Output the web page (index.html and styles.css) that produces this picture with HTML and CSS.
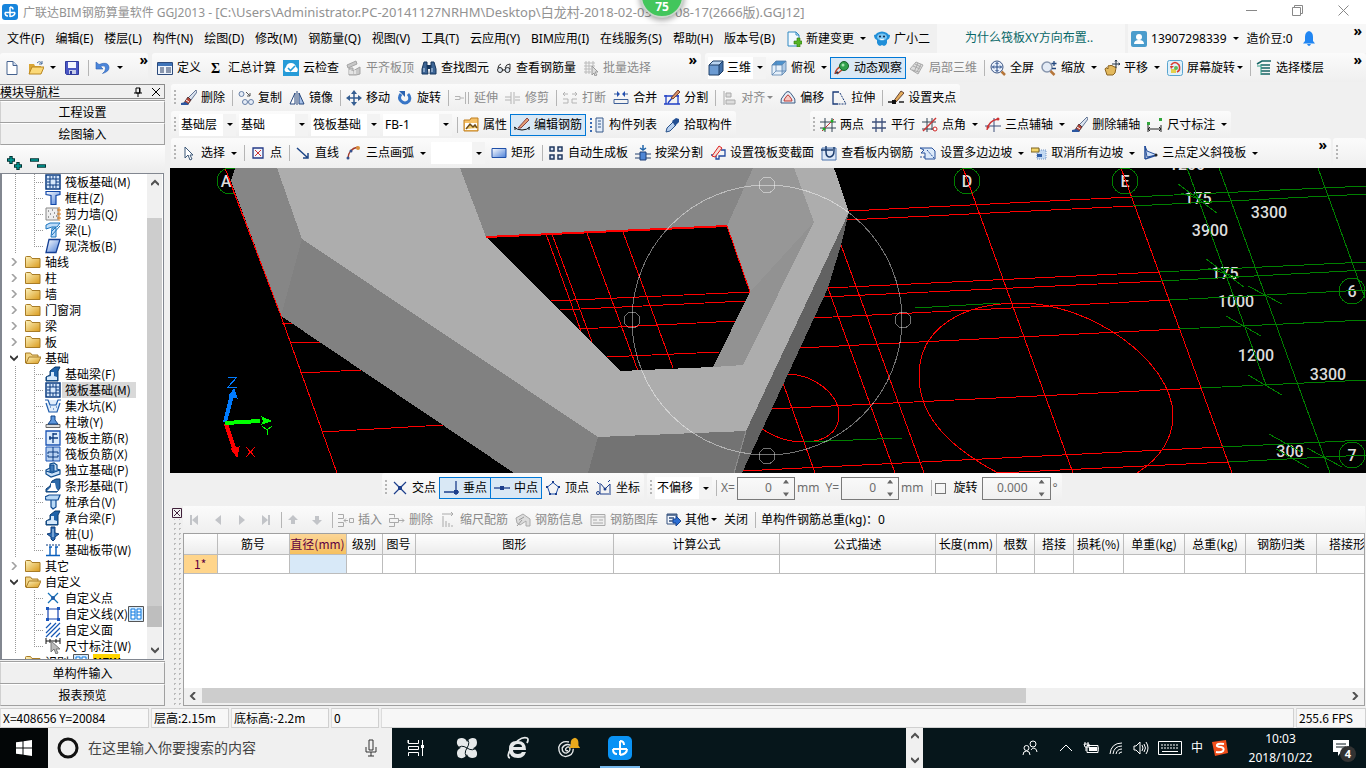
FILE: index.html
```html
<!DOCTYPE html>
<html lang="zh-CN">
<head>
    <meta charset="UTF-8">
    <meta name="viewport" content="width=device-width, initial-scale=1.0">
    <title>广联达BIM钢筋算量软件 GGJ2013</title>
    <link rel="stylesheet" href="styles.css">
</head>
<body>
    <!-- Icon sprite -->
    <svg class="sprite" aria-hidden="true">
        <defs>
            <linearGradient id="gold" x1="0" y1="0" x2="1" y2="1"><stop offset="0" stop-color="#fdf3bd"/><stop offset="1" stop-color="#d99a1c"/></linearGradient>
            <linearGradient id="blue" x1="0" y1="0" x2="1" y2="1"><stop offset="0" stop-color="#fff"/><stop offset="1" stop-color="#4a7fd8"/></linearGradient>
        </defs>
        <symbol id="logo" viewBox="0 0 16 16"><rect width="16" height="16" rx="3" fill="#1684dc"/><path d="M8 3v10M3 8.500h10M8 3q3 0 3 2.500M3 8.500q0 3.500 3 3.500M13 8.500q0 3.500-5 4" fill="none" stroke="#fff" stroke-width="1.500"/></symbol>
        <symbol id="new" viewBox="0 0 16 16"><path d="M3 1.500h6l4 4v9H3z" fill="#fff" stroke="#45628f"/><path d="M9 1.500v4h4" fill="#cfdcf0" stroke="#45628f"/></symbol>
        <symbol id="open" viewBox="0 0 16 16"><path d="M1 4h5l1 2h6v8H1z" fill="#d9a534"/><path d="M1 14l3-7h12l-3 7z" fill="#fbd978" stroke="#b98620"/><path d="M9 3q3-3 5 1m0-3v3h-3" fill="none" stroke="#4b6f9c"/></symbol>
        <symbol id="save" viewBox="0 0 16 16"><path d="M1.500 1.500h13v13h-12l-1-1z" fill="#4a56c4" stroke="#303b9c"/><path d="M4 2h8v6H4z" fill="#f4f6ff"/><path d="M5 10h7v4H5z" fill="#c7cde8"/><path d="M6 11h2v3H6z" fill="#303b9c"/></symbol>
        <symbol id="undo" viewBox="0 0 16 16"><path d="M1 2v7h7L5.500 6.500q5-2 5 2 0 3-3 5 7-2 6.500-6.500Q13 1 4 4.500z" fill="#4b86db" stroke="#2a5fb4" stroke-width=".6"/></symbol>
        <symbol id="define" viewBox="0 0 16 16"><path d="M.5 2.500h15v12H.5z" fill="#edf3fb" stroke="#2c4a7b"/><path d="M1 3h14v3H1z" fill="#3f74b9"/><path d="M3 8h4M3 10h4M3 12h4M9 8h5M9 10h5M9 12h5" stroke="#273b60"/></symbol>
        <symbol id="sum" viewBox="0 0 16 16"><text x="3" y="13" font-size="14" font-weight="bold" font-family="Liberation Serif, serif">Σ</text></symbol>
        <symbol id="cloud" viewBox="0 0 16 16"><rect width="16" height="16" fill="#269bd8"/><path d="M3 12q-3-2 0-5 1-4 5-4 4 0 5 4 3 2 1 5z" fill="#fff"/><path d="M5 8l2.500 2.500L12 6" fill="none" stroke="#269bd8" stroke-width="1.600"/></symbol>
        <symbol id="flush" viewBox="0 0 16 16"><path d="M1 5l9-4 1 3-9 4zM3 8h4v3l7-4v7l-4 1H3z" fill="#c8c8c8" stroke="#a5a5a5"/><path d="M4 10v4M6 11v3M9 10v4" stroke="#fff"/></symbol>
        <symbol id="binoc" viewBox="0 0 16 16"><path d="M3 2h3v4l1 8H1V9zM10 2h3l2 7v5H9l1-8z" fill="#3d6595" stroke="#17365d"/><path d="M6 5h4v4H6z" fill="#17365d"/><path d="M3 8v4M11 8v4" stroke="#c9dcf2"/></symbol>
        <symbol id="glasses" viewBox="0 0 16 16"><path d="M2 8q0-3 3-4M9 8q1-4 5-4v5" fill="none" stroke="#333"/><circle cx="4" cy="10" r="2.500" fill="#dde6ef" stroke="#222"/><circle cx="11.500" cy="10" r="2.500" fill="#dde6ef" stroke="#222"/><path d="M6 10h3" stroke="#222"/></symbol>
        <symbol id="batch" viewBox="0 0 16 16"><path d="M1 3h11M1 6h11M1 9h7M1 12h7M3 1v13M6 1v13M10 1v5" stroke="#bbb" fill="none"/><path d="M9 6l6 6h-3l2 3-2 1-1-3-2 2z" fill="#ddd" stroke="#999"/></symbol>
        <symbol id="cube" viewBox="0 0 16 16"><path d="M1 5h10v10H1z" fill="#6c9bd2"/><path d="M1 5l4-4h10l-4 4z" fill="#b9d4f1"/><path d="M11 5l4-4v10l-4 4z" fill="#416fa8"/><path d="M1 5h10v10H1zM1 5l4-4h10l-4 4M15 1v10l-4 4" fill="none" stroke="#1f3f66"/></symbol>
        <symbol id="cubetop" viewBox="0 0 16 16"><path d="M1 5h10v10H1z" fill="#e6f0fa"/><path d="M1 5l4-4h10l-4 4z" fill="#4d92cd"/><path d="M11 5l4-4v10l-4 4z" fill="#b2cce6"/><path d="M1 5h10v10H1zM1 5l4-4h10l-4 4M15 1v10l-4 4M5 1v10h10M1 15l4-4" fill="none" stroke="#5782ad" stroke-width=".8"/></symbol>
        <symbol id="orbit" viewBox="0 0 16 16"><path d="M1 14q1-6 7-8M3 14l11-9" stroke="#c0442c" fill="none" stroke-width="1.500"/><circle cx="10" cy="6" r="4.500" fill="#2fa04c" stroke="#17602a"/><circle cx="9" cy="5" r="1.500" fill="#a4e3b0"/><path d="M1 14l4-1-2-2z" fill="#234"/></symbol>
        <symbol id="part3d" viewBox="0 0 16 16"><path d="M1 9l6-7 7 3-5 9z" fill="#ddd" stroke="#aaa"/><path d="M4 6l7 3M6 4l6 3M3 10l7 2M9 3L5 12M12 4L8 12" stroke="#aaa"/></symbol>
        <symbol id="full" viewBox="0 0 16 16"><circle cx="7" cy="7" r="6" fill="#e8effa" stroke="#3b5584"/><path d="M7 2.500v9M2.500 7h9M5.500 4L7 2.500 8.500 4M5.500 10L7 11.500 8.500 10M4 5.500L2.500 7 4 8.500M10 5.500L11.500 7 10 8.500" fill="none" stroke="#274a86"/><path d="M11.500 11.500L15 15" stroke="#b5763a" stroke-width="2.500"/></symbol>
        <symbol id="zoom" viewBox="0 0 16 16"><circle cx="6" cy="7" r="5" fill="#e4ebf5" stroke="#8795ad" stroke-width="1.500"/><path d="M9.500 11l4 4" stroke="#b5763a" stroke-width="2.500"/><path d="M13 1v5M10.500 3.500h5M11 8.500h4" stroke="#23477f" stroke-width="1.300"/></symbol>
        <symbol id="pan" viewBox="0 0 16 16"><path d="M3 15l-2-6q1-2 2-1l1 1V6q1-1 2 0 1-2 2 0 1-1 2 1 2-1 2 1l-1 5-2 2z" fill="#e3b95d" stroke="#8b6422"/><path d="M12 0v8M8 4h8M11 1.500L12 0l1 1.500M14.500 3L16 4l-1.500 1" fill="none" stroke="#234"/></symbol>
        <symbol id="scrrot" viewBox="0 0 16 16"><rect x=".5" y=".5" width="15" height="15" rx="2" fill="#dff1fb" stroke="#58a4cf"/><path d="M4 5q4-5 8 0 2 5-2 7" fill="none" stroke="#d93a2e" stroke-width="1.600"/><path d="M3 6h4L4 9z" fill="#d93a2e"/><path d="M4 9h5v4H4z" fill="#e4d04c"/><circle cx="9" cy="8" r="2" fill="#5dbb5a"/></symbol>
        <symbol id="floors" viewBox="0 0 16 16"><path d="M1 4l5-3h9M5 5h9M5 8h9M5 11h9M5 14h9" stroke="#176464" stroke-width="1.500" fill="none"/><path d="M5 4v11M1 6h4" stroke="#2f9c86"/></symbol>
        <symbol id="brush" viewBox="0 0 16 16"><path d="M15 0l1 2-6 8-3-2z" fill="#dbe3ef" stroke="#40557b" stroke-width=".8"/><path d="M7 7l3 3-3 4-4-1z" fill="#b9473a" stroke="#533"/><path d="M5 10l3 2" stroke="#fff"/><path d="M0 13l5-1 3 3H0z" fill="#2b57a1"/></symbol>
        <symbol id="copy" viewBox="0 0 16 16"><circle cx="3.500" cy="4" r="2.500" fill="#e6edf7" stroke="#667fa6"/><circle cx="7" cy="12" r="2.500" fill="#e6edf7" stroke="#667fa6"/><circle cx="13" cy="12" r="2.500" fill="#e6edf7" stroke="#667fa6"/><path d="M8 2l4 4M12 3v3H9" fill="none" stroke="#555"/></symbol>
        <symbol id="mirror" viewBox="0 0 16 16"><path d="M6 3v11H1z" fill="#fff" stroke="#27477c"/><path d="M10 3v11h5z" fill="#a9c3ea" stroke="#27477c"/><path d="M8 1v14" stroke="#27477c"/></symbol>
        <symbol id="move" viewBox="0 0 16 16"><path d="M8 2v12M2 8h12" stroke="#355e92" stroke-width="1.500"/><path d="M8 0l3 4H5zM8 16l3-4H5zM0 8l4-3v6zM16 8l-4-3v6z" fill="#355e92"/></symbol>
        <symbol id="rotate" viewBox="0 0 16 16"><path d="M4 4q-3 4 0 7 4 4 8 0 2-4-1-7" fill="none" stroke="#3775c6" stroke-width="3"/><path d="M2 1h6v6z" fill="#2a62b0"/></symbol>
        <symbol id="extend" viewBox="0 0 16 16"><path d="M1 6.500h5v3H1M6 8h4" fill="none" stroke="#b4b4b4"/><path d="M11.500 2v12M14.500 2v12" stroke="#b4b4b4"/></symbol>
        <symbol id="trim" viewBox="0 0 16 16"><path d="M6 2v12M9 2v12M0 7h6M0 10h6M10 7h5M10 10h5" stroke="#b4b4b4"/></symbol>
        <symbol id="break" viewBox="0 0 16 16"><path d="M1 9h5v4H1M15 9h-5v4h5M1 4h5M10 4h5M3 2L1 4l2 2M13 2l2 2-2 2" fill="none" stroke="#b4b4b4"/></symbol>
        <symbol id="merge" viewBox="0 0 16 16"><path d="M1 9.500h14v4H1zM1 4h5M10 4h5" fill="none" stroke="#3d5f98"/><path d="M4 1l3 3-3 3zM12 1L9 4l3 3z" fill="#2450b0"/></symbol>
        <symbol id="split" viewBox="0 0 16 16"><path d="M2 5v9h12V5M0 6h15M0 14h16M4 13L13 2" fill="none" stroke="#1f3fc5" stroke-width="1.300"/><path d="M7 8l7-8 2 2-7 7z" fill="#d99063" stroke="#743"/></symbol>
        <symbol id="align" viewBox="0 0 16 16"><path d="M3 1v14M5 3h5v4H5zM5 10h9v4H5z" fill="#ddd" stroke="#aaa"/></symbol>
        <symbol id="offset" viewBox="0 0 16 16"><path d="M1 13q-1-4 3-8 4-7 8 0 4 4 3 8z" fill="#e6eef7" stroke="#3c5b82"/><path d="M4 11q0-2 2-4 2-4 4 0 2 2 2 4z" fill="#f7c8c3" stroke="#bd3b33"/></symbol>
        <symbol id="stretch" viewBox="0 0 16 16"><path d="M8 2H2v12h5" fill="none" stroke="#1b3b78" stroke-width="1.300"/><path d="M9 3l6 11H7" fill="none" stroke="#1b3b78" stroke-dasharray="2 1"/></symbol>
        <symbol id="grippt" viewBox="0 0 16 16"><path d="M0 12h5M11 12h5" stroke="#222" stroke-width="1.500"/><path d="M5 12l8-11 3 2-8 9z" fill="#e5ad5b" stroke="#643"/><path d="M4 10h4v4H4z" fill="#111"/></symbol>
        <symbol id="prop" viewBox="0 0 16 16"><path d="M1 3h6l1-2h7v13H1z" fill="#f6c269" stroke="#bf7f21"/><path d="M2 6h12v7H2z" fill="#fff"/><path d="M3 12l4-5 3 3 2-2 2 3" stroke="#6d4d19" stroke-width="1.500" fill="#efc564"/></symbol>
        <symbol id="rebar" viewBox="0 0 16 16"><path d="M0 10q3 3 8 3t8-3M1 10v3M15 10v3" stroke="#111" fill="none"/><path d="M4 11l9-10 2 2-8 8z" fill="#e79d73" stroke="#844"/></symbol>
        <symbol id="list" viewBox="0 0 16 16"><path d="M1 2h3M1 6h3M1 10h3M1 14h3" stroke="#3a6ab3" stroke-width="2" stroke-dasharray="2 1"/><path d="M7 1h7v14H7z" fill="#e4edf9" stroke="#385a8a"/><path d="M9 4h3M9 7h3M9 10h3" stroke="#385a8a"/></symbol>
        <symbol id="pick" viewBox="0 0 16 16"><path d="M2 15l1-4 6-6 3 3-6 6z" fill="#b8d0ef" stroke="#29528a"/><path d="M8 4l4-3 3 1 0 3-4 4z" fill="#234f93"/></symbol>
        <symbol id="twopt" viewBox="0 0 16 16"><path d="M5 1v14M12 1v14M0 5h16M0 11h16" stroke="#345"/><path d="M2 14L14 2" stroke="#b33"/><circle cx="4" cy="12" r="1.500" fill="#2a2"/><circle cx="12" cy="4" r="1.500" fill="#2a2"/></symbol>
        <symbol id="parallel" viewBox="0 0 16 16"><path d="M5 1v14M11 1v14M1 5h14M1 11h14" stroke="#3c4f7a" stroke-width="1.300"/></symbol>
        <symbol id="ptangle" viewBox="0 0 16 16"><path d="M5 1v14M10 1v12M0 5h14M0 12h12" stroke="#345"/><path d="M1 14L14 1" stroke="#c33" stroke-width="1.500"/><circle cx="13" cy="12" r="2" fill="#fff" stroke="#c22"/></symbol>
        <symbol id="threeaxis" viewBox="0 0 16 16"><path d="M9 1v14M0 9h16" stroke="#3c4f7a"/><path d="M2 13q1-9 11-11" fill="none" stroke="#c33" stroke-width="1.300"/><circle cx="13" cy="2" r="1.500" fill="#c33"/><circle cx="3" cy="10" r="1.500" fill="#c33"/></symbol>
        <symbol id="dim" viewBox="0 0 16 16"><path d="M1 8v7M14 8v7M1 12h13M3 10l-2 2 2 2M12 10l2 2-2 2" fill="none" stroke="#222"/><path d="M0 5h3v3H0zM12 1h3v3h-3z" fill="#30a53a"/></symbol>
        <symbol id="cursor" viewBox="0 0 16 16"><path d="M4 2v11l3-3 2 5 2-1-2-4h3z" fill="#fff" stroke="#3c5878"/></symbol>
        <symbol id="point" viewBox="0 0 16 16"><path d="M3 3h10v10H3z" fill="#f3f6fd" stroke="#243a87" stroke-width="1.300"/><path d="M5 5l6 6M11 5l-6 6" stroke="#c33"/></symbol>
        <symbol id="line" viewBox="0 0 16 16"><path d="M2 3l11 10M13 8v5H8" fill="none" stroke="#1c4587" stroke-width="1.500"/></symbol>
        <symbol id="arc" viewBox="0 0 16 16"><path d="M2 14Q2 4 12 2" fill="none" stroke="#a33b2d" stroke-width="1.500"/><circle cx="12" cy="3" r="2" fill="#d98e3a"/><circle cx="2" cy="13" r="1.500" fill="#354f8c"/><circle cx="5" cy="6" r="1.500" fill="#354f8c"/></symbol>
        <symbol id="rect" viewBox="0 0 16 16"><path d="M1 3.500h14v9H1z" fill="url(#blue)" stroke="#1f4fa8"/></symbol>
        <symbol id="auto" viewBox="0 0 16 16"><path d="M2 2h4v4H2zM10 2h4v4h-4zM2 10h4v4H2zM10 10h4v4h-4z" fill="#d6e2f6" stroke="#20385f" stroke-width="1.500"/></symbol>
        <symbol id="bybeam" viewBox="0 0 16 16"><path d="M0 9h5M11 9h5M0 13h5M11 13h5" stroke="#25406f"/><path d="M5 7h6v8H5z" fill="#4f86d5" stroke="#1d3f79"/><path d="M8 0v5M5 3l3 2 3-2" fill="none" stroke="#26a" stroke-width="1.500"/></symbol>
        <symbol id="section" viewBox="0 0 16 16"><path d="M1 10h5v4h3v-3h6V5h-4" fill="none" stroke="#2349a0" stroke-width="1.300"/><path d="M2 11L9 1l3 2-7 9z" fill="#f4dcd5" stroke="#d22"/></symbol>
        <symbol id="viewbar" viewBox="0 0 16 16"><path d="M1 3h14v12H1z" fill="#dce8f8" stroke="#4a73ac"/><path d="M0 5h12M5 1v6q0 5 4 5 4-1 4-6V2" fill="none" stroke="#1c3c6d" stroke-width="1.500"/></symbol>
        <symbol id="slope" viewBox="0 0 16 16"><path d="M0 3h12l3 3v8H5V8H1l3-3z" fill="#ddeafa" stroke="#27509b"/><path d="M0 12h5M7 5l7 8" stroke="#27509b" stroke-dasharray="2 1"/></symbol>
        <symbol id="unslope" viewBox="0 0 16 16"><path d="M6 5h9v9H6z" fill="#c3d9f2" stroke="#7596c5" stroke-dasharray="1 1"/><path d="M0 3h8v4H0z" fill="#f4d66b" stroke="#7b611e"/><path d="M6 9h5v3H6z" fill="#2e5da8"/></symbol>
        <symbol id="incline" viewBox="0 0 16 16"><path d="M3 1l2 11 10-2-10-4z" fill="#cfe0f8" stroke="#27509b"/><path d="M3 1v13M3 14l12-4" stroke="#27509b" stroke-width="1.500"/><circle cx="14" cy="10" r="1.500" fill="#222"/></symbol>
        <symbol id="cross" viewBox="0 0 16 16"><path d="M2 2l12 12M14 2L2 14" stroke="#1d3f8c" stroke-width="1.200"/><path d="M6 6h4v4H6z" fill="#1d3f8c"/></symbol>
        <symbol id="perp" viewBox="0 0 16 16"><path d="M13 1v14M1 12h15" stroke="#1d3f8c" stroke-width="1.300"/><path d="M11 10h4v4h-4z" fill="#1d3f8c"/></symbol>
        <symbol id="mid" viewBox="0 0 16 16"><path d="M0 8h16" stroke="#1d3f8c" stroke-width="1.300"/><path d="M6 6h4v4H6z" fill="#1d3f8c"/></symbol>
        <symbol id="vertex" viewBox="0 0 16 16"><path d="M8 2.500l5.500 4.500-2.500 7H5L2.500 7z" fill="none" stroke="#1d4fa8"/><path d="M7 1h2v2H7zM1 6h2v2H1zM13 6h2v2h-2zM4 13h2v2H4zM10 13h2v2h-2z" fill="#1d3f8c"/></symbol>
        <symbol id="coord" viewBox="0 0 16 16"><path d="M4 3v11h11M5 4l4 5 5-5M14 4v9M1 2l2 2M14 0l-2 2" fill="none" stroke="#1d3f8c"/><circle cx="9" cy="9" r="1.500" fill="#1d3f8c"/><circle cx="2" cy="13" r="1.500" fill="none" stroke="#1d3f8c"/></symbol>
        <symbol id="first" viewBox="0 0 16 16"><path d="M4 3h2v10H4zM12 3v10L6 8z" fill="#c2c4c8"/></symbol>
        <symbol id="prev" viewBox="0 0 16 16"><path d="M11 3v10L5 8z" fill="#c2c4c8"/></symbol>
        <symbol id="next" viewBox="0 0 16 16"><path d="M5 3v10l6-5z" fill="#c2c4c8"/></symbol>
        <symbol id="last" viewBox="0 0 16 16"><path d="M4 3v10l6-5zM10 3h2v10h-2z" fill="#c2c4c8"/></symbol>
        <symbol id="up" viewBox="0 0 16 16"><path d="M8 3l5 5h-3v4H6V8H3z" fill="#c2c4c8"/></symbol>
        <symbol id="down" viewBox="0 0 16 16"><path d="M8 13l5-5h-3V4H6v4H3z" fill="#c2c4c8"/></symbol>
        <symbol id="insert" viewBox="0 0 16 16"><path d="M0 2.500h5.500v4H0M0 10.500h5.500v4H0M6 8.500h4M8 6.500l-2 2 2 2M11.500 6.500h4v4h-4z" fill="none" stroke="#aaa"/></symbol>
        <symbol id="remove" viewBox="0 0 16 16"><path d="M0 2.500h5.500v3M5.500 11v3.500H0M.5 6.500h9v4h-9zM10 8.500h5M13 6.500l2 2-2 2" fill="none" stroke="#aaa"/></symbol>
        <symbol id="scale" viewBox="0 0 16 16"><path d="M2 2h11M11 0l2 2-2 2M3 4v11M6 9v6M9 11v4M12 13v2" fill="none" stroke="#aaa"/></symbol>
        <symbol id="info" viewBox="0 0 16 16"><path d="M1 6l7-4 7 5v7h-4V9l-6 4-3-2z" fill="#ddd" stroke="#aaa"/><path d="M4 8l5-3M2 14l5-6" stroke="#999"/></symbol>
        <symbol id="lib" viewBox="0 0 16 16"><path d="M1 2.500h14v11H1z" fill="#eee" stroke="#aaa"/><path d="M1 5h14M3 8h4M9 8h4M3 11h10" stroke="#aaa"/></symbol>
        <symbol id="other" viewBox="0 0 16 16"><path d="M2 2h10v10H2z" fill="#f3f7fd" stroke="#36537e"/><path d="M2 3h10M4 6h5M4 9h4" stroke="#36537e" stroke-width="1.500"/><path d="M8 7h3V4l5 5-5 5v-3H8z" fill="#2c6ed2" stroke="#174592"/></symbol>
        <symbol id="docadd" viewBox="0 0 16 16"><path d="M2 1h8l3 3v11H2z" fill="#f2f9ff" stroke="#3089c2"/><path d="M10 1v3h3" fill="none" stroke="#3089c2"/><path d="M8 10h3V7h3v3h2v3h-2v3h-3v-3H8z" fill="#55b526" stroke="#30770f" stroke-width=".6"/></symbol>
        <symbol id="mascot" viewBox="0 0 16 16"><path d="M0 4q2 0 3-2 5-3 10 0 1 2 3 2 0 4-3 5v3q-1 3-3 3l-2-1-2 1q-2 0-3-3V9Q0 8 0 4z" fill="#218fd8"/><ellipse cx="8" cy="6" rx="5" ry="3.500" fill="#7cc6f2"/><circle cx="6" cy="5.500" r="1" fill="#124"/><circle cx="10" cy="5.500" r="1" fill="#124"/><path d="M6 8q2 1 4 0" stroke="#fff" fill="none"/></symbol>
        <symbol id="user" viewBox="0 0 16 16"><rect width="16" height="16" rx="2" fill="#4a9ccc"/><circle cx="8" cy="6" r="3" fill="#fff"/><path d="M3 13q0-4 5-4t5 4z" fill="#fff"/></symbol>
        <symbol id="bell" viewBox="0 0 16 16"><path d="M8 0q4 1 4 6v4l2 2.500H2L4 10V6q0-5 4-6z" fill="#2186f2"/><path d="M6 13h4q-2 4-4 0z" fill="#2186f2"/></symbol>
        <symbol id="chev" viewBox="0 0 8 8"><path d="M2 0l4 4-4 4" fill="none" stroke="#a0a0a0" stroke-width="1.600"/></symbol>
        <symbol id="chevo" viewBox="0 0 8 8"><path d="M0 2l4 4 4-4" fill="none" stroke="#333" stroke-width="1.800"/></symbol>
        <symbol id="folder" viewBox="0 0 16 16"><path d="M.5 3.500q0-1 1-1h4l1.500 2h8v9H.5z" fill="url(#gold)" stroke="#a87c26"/></symbol>
        <symbol id="foldero" viewBox="0 0 16 16"><path d="M.5 13V3h5l1.500 2h6v3" fill="#f2d585" stroke="#a87c26"/><path d="M1 13.500l3-6.500h12l-3 6.500z" fill="url(#gold)" stroke="#a87c26"/></symbol>
        <symbol id="t-raft" viewBox="0 0 16 16"><path d="M1 1h14v14H1z" fill="#d7e8fb" stroke="#0b3b80" stroke-width="1.500"/><path d="M5 2v12M11 2v12M2 5h12M2 11h12M8 2v3M8 11v3M2 8h3M11 8h3" stroke="#0b3b80"/></symbol>
        <symbol id="t-col" viewBox="0 0 16 16"><path d="M1 1.500h14v3l-4 1v9H6V5.500l-5-1z" fill="url(#blue)" stroke="#1348a8" stroke-width="1.200"/></symbol>
        <symbol id="t-wall" viewBox="0 0 16 16"><path d="M1 2h12v12H1z" fill="#eee" stroke="#888"/><path d="M3 5h1M7 4h1M5 8h1M9 7h1M3 11h1M8 11h1M11 10h1" stroke="#444"/><path d="M14 1v14M12 4h4M12 8h4M12 12h4" stroke="#d57c21"/></symbol>
        <symbol id="t-beam" viewBox="0 0 16 16"><path d="M1 3l4-2h10l-3 4H7l-6 2zM7 6h4v9H6z" fill="#bedcf9" stroke="#1b74bd"/><path d="M7 9l4-4M7 13l8-9" stroke="#1b74bd"/></symbol>
        <symbol id="t-slab" viewBox="0 0 16 16"><path d="M4 1.500h11l-4 13H1z" fill="url(#blue)" stroke="#143f94" stroke-width="1.300"/></symbol>
        <symbol id="t-fbeam" viewBox="0 0 16 16"><path d="M1 15v-4l4-2V5l5-4h5l-2 4v10z" fill="#1f62a8" stroke="#0b3a6d"/><path d="M2 14v-3l4-1V6h3v4l3 1v3z" fill="#d5e8fa"/></symbol>
        <symbol id="t-pit" viewBox="0 0 16 16"><path d="M0 2h3l2 5h6l2-5h3M1 5l3 9h8l3-9" fill="#e0edfb" stroke="#1d5bab" stroke-width="1.200"/><path d="M5 9h1M8 11h1M11 9h1" stroke="#1d5bab"/></symbol>
        <symbol id="t-pier" viewBox="0 0 16 16"><path d="M1 10.500h14v3H1z" fill="#ddd" stroke="#666"/><path d="M6 2h4v4l3 4H3l3-4z" fill="#5e97dc" stroke="#134588"/></symbol>
        <symbol id="t-main" viewBox="0 0 16 16"><path d="M1 1h14v14H1z" fill="#dcebfb" stroke="#1b54b4" stroke-width="1.300"/><path d="M8 3v10M4 8h9M5 6v4M8 4h4" stroke="#0b3b80" stroke-width="1.300"/></symbol>
        <symbol id="t-neg" viewBox="0 0 16 16"><path d="M1 1h14v14H1z" fill="#b7d1f1" stroke="#1b54b4"/><path d="M8 1v14M3 6h10M3 11h10M3 6v2M13 6v2M3 9v2M13 9v2" stroke="#0b3b80"/></symbol>
        <symbol id="t-iso" viewBox="0 0 16 16"><path d="M1 8l4-2V2l4-1 3 2v4l3 1v4l-9 3-5-3z" fill="#c9e0f7" stroke="#0d4b8d" stroke-width="1.200"/><path d="M5 3h4v6H5zM1 9l6 2 8-3" fill="#3f79b8" stroke="#0d4b8d"/></symbol>
        <symbol id="t-strip" viewBox="0 0 16 16"><path d="M1 14v-3l4-3 2-5 4-2h4v9l-3 4z" fill="#2f6ba9" stroke="#0d3e73"/><path d="M2 13l4-4V5h4l1 5 2 3z" fill="#fff"/></symbol>
        <symbol id="t-cap" viewBox="0 0 16 16"><path d="M0 3l4-2h11l-2 5H1zM6 6h5v7l-3 2-2-2z" fill="#b9d9f6" stroke="#0e4a91" stroke-width="1.200"/></symbol>
        <symbol id="t-pile" viewBox="0 0 16 16"><path d="M6 1h4v6l4 1-4 3v2l-2 2-2-2v-2L2 8l4-1z" fill="#2b69b0" stroke="#0e3c78"/><path d="M8 3v8" stroke="#c7dff6"/></symbol>
        <symbol id="t-band" viewBox="0 0 16 16"><path d="M1 3h14" stroke="#0b3b80" stroke-dasharray="2 1"/><path d="M1 13.500h14M5 5v8M11 5v8M4 5h3M10 5h3" stroke="#0b5fbd" stroke-width="1.400"/></symbol>
        <symbol id="t-pt" viewBox="0 0 16 16"><path d="M3 3l10 10M13 3L3 13" stroke="#1470b6" stroke-width="1.200"/><circle cx="8" cy="8" r="2" fill="#1f5ca8"/></symbol>
        <symbol id="t-ln" viewBox="0 0 16 16"><path d="M3 3h10v10H3z" fill="#fff" stroke="#1644b0" stroke-width="1.200"/><path d="M1 1h3v3H1zM12 1h3v3h-3zM1 12h3v3H1zM12 12h3v3h-3z" fill="#1d58bd"/></symbol>
        <symbol id="t-face" viewBox="0 0 16 16"><path d="M1 6l5-5M1 11L11 1M1 15L15 1M6 15l9-9M11 15l4-4" stroke="#1557b5" stroke-width="1.200"/></symbol>
        <symbol id="t-dim" viewBox="0 0 16 16"><path d="M1 3h14M1 0v6M15 0v6M5 1v4M11 1v4" stroke="#111"/><path d="M6 3v11l3-3 2 5 2-1-2-4h4z" fill="#bbb" stroke="#777"/></symbol>
        <symbol id="t-grid" viewBox="0 0 16 16"><path d="M.5.500h15v15H.5z" fill="#d4eafd" stroke="#555"/><path d="M3 3h4v10H3zM9 3h4v10H9zM3 6h4M3 9h4M9 6h4M9 9h4" fill="#fff" stroke="#0b78e0"/></symbol>
    </svg>

    <header class="titlebar">
        <svg class="ic"><use href="#logo"/></svg>
        <h1>广联达BIM钢筋算量软件 GGJ2013 - <span class="path">[C:\Users\Administrator.PC-20141127NRHM\Desktop\白龙村-2018-02-03-13-08-17(2666版).GGJ12]</span></h1>
        <div class="bubble">75</div>
        <div class="winctl">
            <button aria-label="最小化"><svg viewBox="0 0 11 11"><path d="M0 5.500h11"/></svg></button>
            <button aria-label="还原"><svg viewBox="0 0 11 11"><path d="M.5 2.500h8v8h-8zM2.500 2V.5h8v8H9"/></svg></button>
            <button aria-label="关闭"><svg viewBox="0 0 11 11"><path d="M.5.500l10 10M10.500.500l-10 10"/></svg></button>
        </div>
    </header>

    <nav class="menubar">
        <button>文件(F)</button><button>编辑(E)</button><button>楼层(L)</button><button>构件(N)</button><button>绘图(D)</button><button>修改(M)</button><button>钢筋量(Q)</button><button>视图(V)</button><button>工具(T)</button><button>云应用(Y)</button><button>BIM应用(I)</button><button>在线服务(S)</button><button>帮助(H)</button><button>版本号(B)</button>
        <div class="menu-extra">
            <button class="tb"><svg class="ic"><use href="#docadd"/></svg>新建变更<i class="arr"></i></button>
            <button class="tb"><svg class="ic"><use href="#mascot"/></svg>广小二</button>
        </div>
        <a class="tip" href="#">为什么筏板XY方向布置..</a>
        <div class="account">
            <button class="tb"><svg class="ic"><use href="#user"/></svg>13907298339<i class="arr"></i></button>
            <button>造价豆:0</button>
            <button class="tb" aria-label="通知"><svg class="ic"><use href="#bell"/></svg></button>
            <span class="more">»</span>
        </div>
    </nav>

    <div class="toolrow top">
        <div class="bar bar-file">
            <button class="tb" aria-label="新建"><svg class="ic"><use href="#new"/></svg></button>
            <button class="tb" aria-label="打开"><svg class="ic"><use href="#open"/></svg><i class="arr"></i></button>
            <button class="tb" aria-label="保存"><svg class="ic"><use href="#save"/></svg></button>
            <i class="sep"></i>
            <button class="tb" aria-label="撤销"><svg class="ic"><use href="#undo"/></svg><i class="arr"></i></button>
            <span class="more">»</span>
        </div>
        <div class="bar bar-std">
            <button class="tb"><svg class="ic"><use href="#define"/></svg>定义</button>
            <button class="tb"><svg class="ic"><use href="#sum"/></svg>汇总计算</button>
            <button class="tb"><svg class="ic"><use href="#cloud"/></svg>云检查</button>
            <button class="tb" disabled><svg class="ic"><use href="#flush"/></svg>平齐板顶</button>
            <button class="tb"><svg class="ic"><use href="#binoc"/></svg>查找图元</button>
            <button class="tb"><svg class="ic"><use href="#glasses"/></svg>查看钢筋量</button>
            <button class="tb" disabled><svg class="ic"><use href="#batch"/></svg>批量选择</button>
            <span class="more">»</span>
        </div>
        <div class="bar bar-view">
            <label class="combo view-combo"><svg class="ic"><use href="#cube"/></svg><select aria-label="视图"><option>三维</option></select><i class="arr"></i></label>
            <button class="tb"><svg class="ic"><use href="#cubetop"/></svg>俯视<i class="arr"></i></button>
            <button class="tb on"><svg class="ic"><use href="#orbit"/></svg>动态观察</button>
            <button class="tb" disabled><svg class="ic"><use href="#part3d"/></svg>局部三维</button>
            <i class="sep"></i>
            <button class="tb"><svg class="ic"><use href="#full"/></svg>全屏</button>
            <button class="tb"><svg class="ic"><use href="#zoom"/></svg>缩放<i class="arr"></i></button>
            <button class="tb"><svg class="ic"><use href="#pan"/></svg>平移<i class="arr"></i></button>
            <button class="tb tight"><svg class="ic"><use href="#scrrot"/></svg>屏幕旋转<i class="arr"></i></button>
            <i class="sep"></i>
            <button class="tb"><svg class="ic"><use href="#floors"/></svg>选择楼层</button>
            <span class="more">»</span>
        </div>
    </div>

    <div class="workspace">
        <aside class="sidebar">
            <div class="side-title"><h2>模块导航栏</h2><button aria-label="固定"><svg viewBox="0 0 10 10"><path d="M3 1h4v5H3zM1 6h8M5 6v4M6.500 1v5"/></svg></button><button aria-label="关闭"><svg viewBox="0 0 10 10"><path d="M1 1l8 8M9 1L1 9"/></svg></button></div>
            <button class="side-btn">工程设置</button>
            <button class="side-btn">绘图输入</button>
            <div class="side-tools">
                <button aria-label="展开"><svg viewBox="0 0 16 14"><path d="M4 0v8M0 4h8M11 6v8M7 10h8" stroke="#033" stroke-width="3.400"/><path d="M4 1v6M1 4h6M11 7v6M8 10h6" stroke="#00a09a" stroke-width="1.400"/></svg></button>
                <button aria-label="折叠"><svg viewBox="0 0 16 14"><path d="M0 4h9M7 10h9" stroke="#033" stroke-width="3.400"/><path d="M1 4h7M8 10h7" stroke="#00a09a" stroke-width="1.400"/></svg></button>
            </div>
            <div class="tree">
                <ul class="nodes">
                    <li><ul class="kids">
                        <li><svg class="ic"><use href="#t-raft"/></svg>筏板基础(M)</li>
                        <li><svg class="ic"><use href="#t-col"/></svg>框柱(Z)</li>
                        <li><svg class="ic"><use href="#t-wall"/></svg>剪力墙(Q)</li>
                        <li><svg class="ic"><use href="#t-beam"/></svg>梁(L)</li>
                        <li><svg class="ic"><use href="#t-slab"/></svg>现浇板(B)</li>
                    </ul></li>
                    <li><div class="node"><svg class="chev"><use href="#chev"/></svg><svg class="ic"><use href="#folder"/></svg>轴线</div></li>
                    <li><div class="node"><svg class="chev"><use href="#chev"/></svg><svg class="ic"><use href="#folder"/></svg>柱</div></li>
                    <li><div class="node"><svg class="chev"><use href="#chev"/></svg><svg class="ic"><use href="#folder"/></svg>墙</div></li>
                    <li><div class="node"><svg class="chev"><use href="#chev"/></svg><svg class="ic"><use href="#folder"/></svg>门窗洞</div></li>
                    <li><div class="node"><svg class="chev"><use href="#chev"/></svg><svg class="ic"><use href="#folder"/></svg>梁</div></li>
                    <li><div class="node"><svg class="chev"><use href="#chev"/></svg><svg class="ic"><use href="#folder"/></svg>板</div></li>
                    <li><div class="node"><svg class="chev"><use href="#chevo"/></svg><svg class="ic"><use href="#foldero"/></svg>基础</div>
                        <ul class="kids">
                            <li><svg class="ic"><use href="#t-fbeam"/></svg>基础梁(F)</li>
                            <li class="sel"><svg class="ic"><use href="#t-raft"/></svg><span>筏板基础(M)</span></li>
                            <li><svg class="ic"><use href="#t-pit"/></svg>集水坑(K)</li>
                            <li><svg class="ic"><use href="#t-pier"/></svg>柱墩(Y)</li>
                            <li><svg class="ic"><use href="#t-main"/></svg>筏板主筋(R)</li>
                            <li><svg class="ic"><use href="#t-neg"/></svg>筏板负筋(X)</li>
                            <li><svg class="ic"><use href="#t-iso"/></svg>独立基础(P)</li>
                            <li><svg class="ic"><use href="#t-strip"/></svg>条形基础(T)</li>
                            <li><svg class="ic"><use href="#t-cap"/></svg>桩承台(V)</li>
                            <li><svg class="ic"><use href="#t-fbeam"/></svg>承台梁(F)</li>
                            <li><svg class="ic"><use href="#t-pile"/></svg>桩(U)</li>
                            <li><svg class="ic"><use href="#t-band"/></svg>基础板带(W)</li>
                        </ul></li>
                    <li><div class="node"><svg class="chev"><use href="#chev"/></svg><svg class="ic"><use href="#folder"/></svg>其它</div></li>
                    <li><div class="node"><svg class="chev"><use href="#chevo"/></svg><svg class="ic"><use href="#foldero"/></svg>自定义</div>
                        <ul class="kids">
                            <li><svg class="ic"><use href="#t-pt"/></svg>自定义点</li>
                            <li><svg class="ic"><use href="#t-ln"/></svg>自定义线(X)<svg class="ic badge"><use href="#t-grid"/></svg></li>
                            <li><svg class="ic"><use href="#t-face"/></svg>自定义面</li>
                            <li><svg class="ic"><use href="#t-dim"/></svg>尺寸标注(W)</li>
                        </ul></li>
                    <li><div class="node"><svg class="chev"></svg><svg class="ic"><use href="#folder"/></svg>识别<svg class="ic"><use href="#t-grid"/></svg><b class="newtag">NEW</b></div></li>
                </ul>
                <div class="vscroll"><svg viewBox="0 0 8 8"><path d="M0 6l4-4 4 4"/></svg><i class="vthumb"></i><svg viewBox="0 0 8 8"><path d="M0 2l4 4 4-4"/></svg></div>
            </div>
            <button class="side-btn">单构件输入</button>
            <button class="side-btn">报表预览</button>
        </aside>

        <main class="main">
            <div class="toolrow">
                <div class="bar">
                    <i class="grip"></i>
                    <button class="tb"><svg class="ic"><use href="#brush"/></svg>删除</button>
                    <i class="sep"></i>
                    <button class="tb"><svg class="ic"><use href="#copy"/></svg>复制</button>
                    <button class="tb"><svg class="ic"><use href="#mirror"/></svg>镜像</button>
                    <i class="sep"></i>
                    <button class="tb"><svg class="ic"><use href="#move"/></svg>移动</button>
                    <button class="tb"><svg class="ic"><use href="#rotate"/></svg>旋转</button>
                    <i class="sep"></i>
                    <button class="tb" disabled><svg class="ic"><use href="#extend"/></svg>延伸</button>
                    <button class="tb" disabled><svg class="ic"><use href="#trim"/></svg>修剪</button>
                    <i class="sep"></i>
                    <button class="tb" disabled><svg class="ic"><use href="#break"/></svg>打断</button>
                    <button class="tb"><svg class="ic"><use href="#merge"/></svg>合并</button>
                    <button class="tb"><svg class="ic"><use href="#split"/></svg>分割</button>
                    <i class="sep"></i>
                    <button class="tb tight" disabled><svg class="ic"><use href="#align"/></svg>对齐<i class="arr"></i></button>
                    <button class="tb"><svg class="ic"><use href="#offset"/></svg>偏移</button>
                    <button class="tb"><svg class="ic"><use href="#stretch"/></svg>拉伸</button>
                    <i class="sep"></i>
                    <button class="tb"><svg class="ic"><use href="#grippt"/></svg>设置夹点</button>
                </div>
            </div>
            <div class="toolrow">
                <div class="bar bar-comp">
                    <i class="grip"></i>
                    <div class="combos">
                        <label class="combo short"><select aria-label="楼层"><option>基础层</option></select><i class="arr"></i></label>
                        <label class="combo"><select aria-label="构件类型"><option>基础</option></select><i class="arr"></i></label>
                        <label class="combo"><select aria-label="构件"><option>筏板基础</option></select><i class="arr"></i></label>
                        <label class="combo"><select aria-label="名称"><option>FB-1</option></select><i class="arr"></i></label>
                    </div>
                    <i class="sep"></i>
                    <button class="tb"><svg class="ic"><use href="#prop"/></svg>属性</button>
                    <button class="tb on"><svg class="ic"><use href="#rebar"/></svg>编辑钢筋</button>
                    <button class="tb"><svg class="ic"><use href="#list"/></svg>构件列表</button>
                    <button class="tb"><svg class="ic"><use href="#pick"/></svg>拾取构件</button>
                </div>
                <div class="bar bar-axis">
                    <i class="grip"></i>
                    <button class="tb"><svg class="ic"><use href="#twopt"/></svg>两点</button>
                    <button class="tb"><svg class="ic"><use href="#parallel"/></svg>平行</button>
                    <button class="tb"><svg class="ic"><use href="#ptangle"/></svg>点角<i class="arr"></i></button>
                    <button class="tb"><svg class="ic"><use href="#threeaxis"/></svg>三点辅轴<i class="arr"></i></button>
                    <button class="tb"><svg class="ic"><use href="#brush"/></svg>删除辅轴</button>
                    <button class="tb"><svg class="ic"><use href="#dim"/></svg>尺寸标注<i class="arr"></i></button>
                </div>
            </div>
            <div class="toolrow draw">
                <div class="bar bar-draw">
                    <i class="grip"></i>
                    <button class="tb"><svg class="ic"><use href="#cursor"/></svg>选择<i class="arr"></i></button>
                    <i class="sep"></i>
                    <button class="tb"><svg class="ic"><use href="#point"/></svg>点</button>
                    <i class="sep"></i>
                    <button class="tb"><svg class="ic"><use href="#line"/></svg>直线</button>
                    <button class="tb"><svg class="ic"><use href="#arc"/></svg>三点画弧<i class="arr"></i></button>
                    <label class="combo arc-combo"><select aria-label="画弧方式"><option></option></select><i class="arr"></i></label>
                    <button class="tb"><svg class="ic"><use href="#rect"/></svg>矩形</button>
                    <i class="sep"></i>
                    <button class="tb"><svg class="ic"><use href="#auto"/></svg>自动生成板</button>
                    <button class="tb"><svg class="ic"><use href="#bybeam"/></svg>按梁分割</button>
                    <button class="tb"><svg class="ic"><use href="#section"/></svg>设置筏板变截面</button>
                    <button class="tb"><svg class="ic"><use href="#viewbar"/></svg>查看板内钢筋</button>
                    <button class="tb"><svg class="ic"><use href="#slope"/></svg>设置多边边坡<i class="arr"></i></button>
                    <button class="tb"><svg class="ic"><use href="#unslope"/></svg>取消所有边坡<i class="arr"></i></button>
                    <button class="tb"><svg class="ic"><use href="#incline"/></svg>三点定义斜筏板<i class="arr"></i></button>
                    <span class="more">»</span>
                </div>
                <div class="bar bar-rest"><i class="grip"></i></div>
            </div>

            <!-- 3D view of the raft foundation over the axis grid -->
            <svg class="viewport" viewBox="170 168 1196 305" preserveAspectRatio="xMinYMin slice">
                <rect x="170" y="168" width="1196" height="305" fill="#000"/>
                <g class="labels">
                    <text x="226" y="187">A</text><text x="967" y="187">D</text><text x="1125" y="187">E</text>
                    <text x="1352" y="297">6</text><text x="1352" y="461">7</text>
                    <text x="1187" y="170">1200</text><text x="1198" y="204">175</text><text x="1269" y="218">3300</text><text x="1210" y="236">3900</text>
                    <text x="1225" y="279">175</text><text x="1236" y="307">1000</text><text x="1256" y="361">1200</text><text x="1328" y="380">3300</text><text x="1290" y="457">300</text>
                </g>
                <g class="red">
                    <path d="M225 168L281 316 337 473M282 323h11M290 343l30-1M300 373l61-3M322 432l121-7"/>
                    <path d="M963 168l110 305M1121 168l111 305M841 245l83 228M828 288l67 185M783 383l32 90"/>
                    <path d="M849 211l282-14M847 220l286-14M828 288l331-16M823 297l338-16M813 318l356-18M799 348l380-19M770 409l431-21M742 471l480-24M998 473l230-11"/>
                    <path d="M546 234l35 97M552 234l40 108M587 233l51 138M623 232l50 136M551 301l199-9M560 310l186-9M579 329l157-8M607 357l112-5"/>
                    <path d="M786 374C815 374 839 395 839 415 839 434 822 442 804 442 787 442 775 437 762 429"/>
                    <path d="M998 473C955 450 919 420 919 376 919 328 962 303 1020 303 1090 303 1172 360 1173 415Q1173 450 1137 473"/>
                </g>
                <g class="green">
                    <circle cx="230" cy="181" r="13"/><circle cx="967" cy="181" r="13"/><circle cx="1125" cy="181" r="13"/><circle cx="1352" cy="291" r="13"/><circle cx="1352" cy="455" r="13"/>
                    <path d="M1131 197l235-11M1133 206l233-12M1159 272l207-10M1161 281l205-11M915 308l85-5M1169 300l197-10M1179 329l187-9M1201 388l165-8M1222 447l144-7M1228 462l138-7M804 442l98-4"/>
                    <path d="M1187 168l79 217M1219 168l111 305M1318 168l47 130"/>
                    <path d="M1178 184l39 29M1181 193l31 10M1206 259l38 28M1208 268l31 10M1248 286l34 18M1226 316l35 20M1248 375l34 20M1269 434l34 19M1276 449l33 19M1307 448l35 19"/>
                </g>
                <g class="solid">
                    <path fill="#868686" d="M235 168h42l25 71-21 77-50-135z"/>
                    <path fill="#818181" d="M302 239l296 198-10 36h-74L281 316z"/>
                    <path fill="#868686" d="M460 168h293l-26 58-241 11z"/>
                    <path fill="#979797" d="M753 168h41l20 54-64 70-23-66z"/>
                    <path fill="#929292" d="M750 292l64-70-71 143-30 2z"/>
                    <path fill="#adadad" d="M277 168h183l26 69 134 134 93-4 30-2 71-143-20-54h40l15 44-103 219-148 6-296-198z"/>
                    <path fill="#626262" d="M849 212l-8 33-13 43-86 185h-8l12-42z"/>
                    <path fill="#737373" d="M598 437l148-6-12 42H588z"/>
                    <path fill="none" stroke="#8c8c8c" d="M746 431l-12 42"/>
                </g>
                <g class="red"><path d="M227 174L281 316"/><path stroke-width="2" d="M486 237l241-11"/><path d="M727 226l23 66"/></g>
                <g class="ring"><circle cx="767" cy="320" r="135"/><circle cx="767" cy="185" r="8"/><circle cx="903" cy="320" r="8"/><circle cx="767" cy="456" r="8"/><circle cx="632" cy="320" r="8"/></g>
                <g class="gizmo">
                    <path stroke="#007bff" stroke-width="4" d="M225 422l7-27"/><path fill="#007bff" d="M234 389l3 9-8-2z" stroke="#007bff"/><path stroke="#007bff" d="M228 377h9l-9 10h9"/>
                    <path stroke="#f00" stroke-width="4" d="M226 424l8 24"/><path fill="#f00" stroke="#f00" d="M231 449l8-2-2 10z"/><path stroke="#f00" d="M246 447l9 10M255 447l-9 10"/>
                    <path stroke="#0f0" stroke-width="4" d="M225 423l35-2"/><path fill="#0f0" d="M261 416l11 5-11 4 2-4z"/><path stroke="#0f0" d="M262 426l5 4 5-4M267 430v5"/>
                </g>
            </svg>

            <div class="toolrow snap">
                <div class="bar">
                    <i class="grip"></i>
                    <button class="tb"><svg class="ic"><use href="#cross"/></svg>交点</button>
                    <button class="tb on"><svg class="ic"><use href="#perp"/></svg>垂点</button>
                    <button class="tb on"><svg class="ic"><use href="#mid"/></svg>中点</button>
                    <button class="tb"><svg class="ic"><use href="#vertex"/></svg>顶点</button>
                    <button class="tb"><svg class="ic"><use href="#coord"/></svg>坐标</button>
                </div>
                <div class="bar bar-offset">
                    <i class="grip"></i>
                    <label class="combo short"><select aria-label="偏移方式"><option>不偏移</option></select><i class="arr"></i></label>
                    <i class="sep"></i>
                    <label class="num">X=<span class="spin"><input type="text" value="0" disabled><i></i></span>mm</label>
                    <label class="num">Y=<span class="spin"><input type="text" value="0" disabled><i></i></span>mm</label>
                    <i class="sep"></i>
                    <label class="check"><input type="checkbox">旋转</label>
                    <label class="num"><span class="spin wide"><input type="text" value="0.000" aria-label="旋转角度" disabled><i></i></span>°</label>
                </div>
            </div>

            <section class="editor">
                <div class="dock"><button aria-label="关闭面板"><svg viewBox="0 0 10 10"><path d="M.5.500h9v9h-9zM2 2l6 6M8 2L2 8"/></svg></button></div>
                <div class="sheet">
                    <div class="bar bar-edit">
                        <button class="tb nav" aria-label="首行" disabled><svg class="ic"><use href="#first"/></svg></button>
                        <button class="tb nav" aria-label="上一行" disabled><svg class="ic"><use href="#prev"/></svg></button>
                        <button class="tb nav" aria-label="下一行" disabled><svg class="ic"><use href="#next"/></svg></button>
                        <button class="tb nav" aria-label="末行" disabled><svg class="ic"><use href="#last"/></svg></button>
                        <i class="sep"></i>
                        <button class="tb nav" aria-label="上移" disabled><svg class="ic"><use href="#up"/></svg></button>
                        <button class="tb nav" aria-label="下移" disabled><svg class="ic"><use href="#down"/></svg></button>
                        <i class="sep"></i>
                        <button class="tb" disabled><svg class="ic"><use href="#insert"/></svg>插入</button>
                        <button class="tb" disabled><svg class="ic"><use href="#remove"/></svg>删除</button>
                        <button class="tb" disabled><svg class="ic"><use href="#scale"/></svg>缩尺配筋</button>
                        <button class="tb" disabled><svg class="ic"><use href="#info"/></svg>钢筋信息</button>
                        <button class="tb" disabled><svg class="ic"><use href="#lib"/></svg>钢筋图库</button>
                        <button class="tb tight"><svg class="ic"><use href="#other"/></svg>其他<i class="arr"></i></button>
                        <button class="tb">关闭</button>
                        <i class="sep"></i>
                        <span>单构件钢筋总重(kg)：0</span>
                    </div>
                    <div class="grid">
                        <table>
                            <colgroup><col class="w33"><col class="w72"><col class="w57"><col class="w36"><col class="w33"><col><col class="w166"><col class="w156"><col class="w61"><col class="w38"><col class="w39"><col class="w50"><col class="w61"><col class="w61"><col class="w71"><col class="w61"></colgroup>
                            <thead><tr><th></th><th>筋号</th><th class="hot">直径(mm)</th><th>级别</th><th>图号</th><th>图形</th><th>计算公式</th><th>公式描述</th><th>长度(mm)</th><th>根数</th><th>搭接</th><th>损耗(%)</th><th>单重(kg)</th><th>总重(kg)</th><th>钢筋归类</th><th>搭接形</th></tr></thead>
                            <tbody><tr><th class="rowno">1*</th><td></td><td class="cell-on"></td><td></td><td></td><td></td><td></td><td></td><td></td><td></td><td></td><td></td><td></td><td></td><td></td><td></td></tr></tbody>
                        </table>
                    </div>
                    <div class="hscroll"><svg viewBox="0 0 8 8"><path d="M6 0L2 4l4 4"/></svg><span class="track"><i></i></span><svg viewBox="0 0 8 8"><path d="M2 0l4 4-4 4"/></svg></div>
                </div>
            </section>
        </main>
    </div>

    <footer class="status">
        <span class="s1">X=408656 Y=20084</span><span class="s2">层高:2.15m</span><span class="s3">底标高:-2.2m</span><span class="s4">0</span><span class="s5"></span><span class="s6">255.6 FPS</span>
    </footer>

    <div class="taskbar">
        <button class="start" aria-label="开始"><svg viewBox="0 0 16 16"><path d="M0 2.300l6.500-.9v6.100H0zM7.500 1.200L16 0v7.500H7.500zM0 8.500h6.500v6.100L0 13.700zM7.500 8.500H16V16l-8.500-1.200z" fill="#fff"/></svg></button>
        <label class="search"><svg class="cortana" viewBox="0 0 22 22"><circle cx="11" cy="11" r="9" fill="none" stroke="#111" stroke-width="3"/></svg><input type="text" placeholder="在这里输入你要搜索的内容"><svg class="mic" viewBox="0 0 12 18"><path d="M4 1h4v10H4zM1 8v5h10V8M6 13v4M3 17h6" fill="none" stroke="#333"/></svg></label>
        <div class="apps">
            <button aria-label="任务视图"><svg viewBox="0 0 24 24"><path d="M4 7V4M4.500 4v3.500h10V4M4.500 20v-3.500h10V20M4.500 10.500h10v3h-10zM18.500 4v16" fill="none" stroke="#fff"/><path d="M17 9h3v3h-3z" fill="#fff"/></svg></button>
            <button aria-label="浏览器"><svg viewBox="0 0 24 24"><g fill="#e6e9ea"><path d="M12 12C3 14 0 7 3 3 9 0 14 4 12 12zM12 12C10 3 17 0 21 3 24 9 20 14 12 12zM12 12C21 10 24 17 21 21 15 24 10 20 12 12zM12 12C14 21 7 24 3 21 0 15 4 10 12 12z"/></g><path d="M11 2q5 4 1 10t1 10M2 13q4-5 10-1t10-1" stroke="#08171c" fill="none"/></svg></button>
            <button aria-label="IE"><svg viewBox="0 0 24 24"><path d="M20 14H7q0 4 5 4 3 0 4-2h4q-2 6-8 6-9 0-9-9t9-8q8 0 8 9zM16 11q0-3-4-3t-5 3z" fill="#e6e9ea" fill-rule="evenodd"/><path d="M4 22q-4-1 1-10Q14 0 21 2q2 1 0 5" stroke="#e6e9ea" fill="none" stroke-width="1.800"/></svg></button>
            <button aria-label="助手"><svg viewBox="0 0 28 24"><path d="M14 5q-9-2-12 6 0 10 8 11 9-1 9-9M16 9q-6-3-10 3 0 6 5 6 5-2 4-6-2-3-5 1 0 3 3 2" fill="none" stroke="#e6e9ea" stroke-width="1.600"/><path d="M21 0q4 1 4 6v3l2 3H14l2-3V6q0-5 5-6z" fill="#e9a91c"/></svg></button>
            <button class="running" aria-label="GGJ2013"><svg viewBox="0 0 24 24"><rect width="24" height="24" rx="5" fill="#0a93f5"/><path d="M12 5v14M5 13h14M12 5q4 0 4 4M5 13q0 5 4 5M19 13q0 5-7 6" fill="none" stroke="#fff" stroke-width="2"/></svg></button>
        </div>
        <div class="taskscroll"><svg viewBox="0 0 8 8"><path d="M0 6l4-4 4 4"/></svg><svg viewBox="0 0 8 8"><path d="M0 2l4 4 4-4"/></svg></div>
        <div class="tray">
            <svg class="people" viewBox="0 0 16 16"><circle cx="11" cy="4" r="3"/><circle cx="4.500" cy="8" r="2.500"/><path d="M9 10q1-2 3-2 3 1 3 4M1 15q0-4 3.500-4T8 15"/></svg>
            <svg viewBox="0 0 16 16"><path d="M2 11l6-6 6 6"/></svg>
            <svg viewBox="0 0 16 16"><path d="M4 5.500h11v7H4zM15 8h1v3M2 2v3M5 2v3M1 4h5v3H2zM3 7v4"/><path d="M6 7h8v4H6z" fill="#fff" stroke="none"/></svg>
            <svg viewBox="0 0 16 16"><path d="M2 14Q3 3 14 3M5 14q1-8 9-8M8 14q1-5 6-5M11 14q0-2 3-2"/></svg>
            <svg viewBox="0 0 16 16"><path d="M1 6h2l4-4v12l-4-4H1zM9 5q2 3 0 6M11 4q3 4 0 8M13 2q4 6 0 12"/></svg>
            <svg class="kbd" viewBox="0 0 24 14"><path d="M.5.500h23v13H.5z"/><path d="M3 4h18M3 7h18" stroke-dasharray="2 1"/><path d="M4 10.500h16"/></svg>
            <span>中</span>
            <svg viewBox="0 0 16 16"><path d="M0 2l14-2 2 13-13 3z" fill="#f04e1b" stroke="none"/><path d="M12 4Q4 3 5 6q1 1 4 1 4 1 2 4-2 2-7 1" stroke-width="2"/></svg>
            <time>10:03<br>2018/10/22</time>
            <button class="notice" aria-label="通知"><svg viewBox="0 0 16 16"><path d="M0 0h16v12H8l-3 4v-4H0z" fill="#fff" stroke="none"/><path d="M3 4h10M3 7h10" stroke="#08171c"/></svg><b>4</b></button>
        </div>
    </div>
</body>
</html>
```
FILE: styles.css
```css
:root {
    --face: #f0f0f0;
    --accent: #0078d7;
    --task: #06161b;
    --ui: "Noto Sans", "Noto Sans CJK SC", sans-serif;
    --song: "Noto Sans CJK SC", sans-serif;
}

* {
    box-sizing: border-box;
    margin: 0;
    padding: 0;
}

body {
    display: flex;
    flex-direction: column;
    height: 100vh;
    overflow: hidden;
    background: var(--face);
    color: #000;
    font: 12px/16px var(--ui);
}

button, input, select {
    font: inherit;
    color: inherit;
    border: 0;
    background: none;
    white-space: nowrap;
}

ul {
    list-style: none;
}

i {
    font-style: normal;
}

.sprite {
    position: absolute;
    width: 0;
    height: 0;
}

.ic {
    width: 16px;
    height: 16px;
    flex: none;
}

/* Title bar */
.titlebar {
    position: relative;
    display: flex;
    align-items: center;
    gap: 5px;
    height: 24px;
    padding-left: 2px;
    background: #fff;
    flex: none;
}

.titlebar h1 {
    flex: 1;
    font-size: 12px;
    font-weight: normal;
    color: #929292;
    white-space: nowrap;
}

.titlebar .path {
    font-size: 13px;
}

.bubble {
    position: absolute;
    left: 640px;
    top: -26px;
    width: 44px;
    height: 44px;
    padding-top: 23px;
    border-radius: 50%;
    border: 2px solid #c9d6cb;
    background: #42c65c;
    color: #fff;
    font-weight: bold;
    text-align: center;
    box-shadow: 0 2px 6px rgba(0,0,0,0.4);
    z-index: 2;
}

.winctl {
    display: flex;
}

.winctl button {
    width: 46px;
    height: 20px;
}

.winctl svg {
    width: 11px;
    height: 11px;
    fill: none;
    stroke: #888;
}

/* Menu */
.menubar {
    display: flex;
    align-items: center;
    gap: 11px;
    height: 29px;
    padding-left: 7px;
    flex: none;
}

.menubar > button {
    flex: none;
}

.menu-extra, .account {
    display: flex;
    align-items: center;
    gap: 8px;
}

.tip {
    align-self: stretch;
    flex: 0 0 188px;
    padding: 6px 0 0 28px;
    margin: 0 -8px 0 -4px;
    background: #f7f7f7;
    color: #086868;
    text-decoration: none;
    white-space: nowrap;
}

.account {
    flex: 1;
    align-self: stretch;
    padding: 0 4px 0 3px;
    background: #f7f7f7;
}

/* Toolbars */
.toolrow {
    display: flex;
    height: 27px;
    padding-left: 1px;
    flex: none;
}

.toolrow.top {
    height: 31px;
    padding: 0 0 2px;
    gap: 4px;
}

.toolrow.draw, .toolrow.snap {
    height: 30px;
}

.bar {
    display: flex;
    align-items: center;
    gap: 7px;
    padding: 0 4px 0 3px;
    border-radius: 3px;
    background: linear-gradient(#fbfbfb, #efefef);
    flex: none;
}

.bar-file {
    width: 148px;
    gap: 8px;
    padding: 0 0 0 4px;
}

.bar-std {
    width: 549px;
    padding-left: 5px;
}

.bar-view {
    flex: 1;
}

.bar-axis {
    margin-left: 74px;
}

.bar-draw {
    flex: 1;
}

.bar-rest {
    width: 33px;
    margin-left: 2px;
}

.tb {
    display: flex;
    align-items: center;
    gap: 4px;
    height: 22px;
    flex: none;
}

.tb:disabled {
    color: #8a8a8a;
}

.tb.on {
    padding: 0 3px;
    margin: 0 -4px;
    border: 1px solid var(--accent);
    background: #d9e8f5;
}

.arr {
    flex: none;
    border: 3px solid transparent;
    border-top-color: currentColor;
    border-bottom: 0;
    margin: 0 0 0 2px;
}

.tight .arr {
    margin-left: -2px;
}

.sep {
    width: 1px;
    height: 16px;
    margin-right: -2px;
    background: #b5b5b5;
    flex: none;
}

.grip {
    width: 2px;
    height: 16px;
    margin-right: -2px;
    background: repeating-linear-gradient(#b5b5b5 0 2px, transparent 2px 4px);
    flex: none;
}

.more {
    margin-left: auto;
    align-self: flex-start;
    font-size: 14px;
    line-height: 14px;
    font-weight: bold;
}

.combos {
    display: flex;
    gap: 3px;
    margin: 0 -2px;
}

.combo {
    display: flex;
    align-items: center;
    width: 69px;
    height: 22px;
    padding: 0 3px 0 2px;
    background: linear-gradient(90deg, #fff calc(100% - 13px), #f3f3f3 0);
    flex: none;
}

.combo.short {
    width: 57px;
}

.arc-combo {
    width: 54px;
    margin: 0 -1px 0 -2px;
}

.view-combo {
    width: 58px;
    gap: 3px;
    padding-left: 0;
    margin-right: -2px;
}

.combo select {
    flex: 1;
    min-width: 0;
    appearance: none;
}

/* Sidebar */
.workspace {
    display: flex;
    gap: 5px;
    flex: 1;
    min-height: 0;
    margin-bottom: 2px;
}

.sidebar {
    display: flex;
    flex-direction: column;
    width: 165px;
    flex: none;
    font-family: var(--song);
}

.side-title {
    display: flex;
    align-items: center;
    gap: 8px;
    height: 15px;
    margin-bottom: 2px;
    padding-right: 3px;
    border: 1px solid #8c8c8c;
    border-left: 0;
}

.side-title h2 {
    flex: 1;
    font-size: 12px;
    line-height: 12px;
    font-weight: normal;
}

.side-title button {
    display: flex;
}

.side-title svg {
    width: 10px;
    height: 10px;
    fill: none;
    stroke: #000;
}

.side-btn {
    height: 22px;
    border: 1px solid #a0a0a0;
    border-top-color: #fff;
    border-left-color: #d0d0d0;
    box-shadow: 0 -1px #a0a0a0;
    flex: none;
}

.side-tools {
    display: flex;
    gap: 7px;
    height: 28px;
    padding: 7px 7px 0;
    background: linear-gradient(#fdfdfd, #ededed);
    flex: none;
}

.side-tools svg {
    display: block;
    width: 16px;
    height: 14px;
}

.tree {
    display: flex;
    flex: 1;
    min-height: 0;
    padding-right: 1px;
    margin-right: 1px;
    border: 1px solid #828790;
    border-left-width: 2px;
    background: #fff;
    overflow: hidden;
}

.nodes {
    flex: 1;
    min-width: 0;
}

.node {
    display: flex;
    align-items: center;
    gap: 4px;
    height: 16px;
    padding-left: 8px;
    white-space: nowrap;
}

.chev {
    width: 8px;
    height: 8px;
    margin-right: 3px;
    flex: none;
}

.kids {
    margin-left: 13px;
    padding-left: 19px;
    background: repeating-linear-gradient(#999 0 1px, transparent 1px 2px) 0 0 / 1px 100% no-repeat;
}

.kids li {
    display: flex;
    align-items: center;
    gap: 4px;
    height: 16px;
    white-space: nowrap;
    background: repeating-linear-gradient(#999 0 1px, transparent 1px 2px) 0 0 / 1px 100% no-repeat;
}

.kids li:last-child {
    background-size: 1px 8px;
}

.kids li::before {
    content: "";
    width: 9px;
    margin-right: -2px;
    border-top: 1px dotted #999;
    flex: none;
}

.sel span {
    padding: 0 5px 0 3px;
    margin-left: -3px;
    background: #d9d9d9;
}

.kids .badge {
    margin-left: -4px;
}

.newtag {
    color: #000;
    background: #ffd500;
}

.vscroll {
    display: flex;
    flex-direction: column;
    align-items: center;
    gap: 31px;
    width: 15px;
    padding: 5px 0;
    background: var(--face);
    flex: none;
}

.vthumb {
    flex: 1;
    width: 15px;
    margin-bottom: -12px;
    background: linear-gradient(#cdcdcd calc(100% - 21px), #bebebe 0);
}

.vscroll svg, .hscroll svg, .taskscroll svg {
    width: 8px;
    height: 8px;
    fill: none;
    stroke: #505050;
    stroke-width: 2;
    flex: none;
}

.tree + .side-btn {
    margin-top: 2px;
}

/* Main area */
.main {
    display: flex;
    flex-direction: column;
    flex: 1;
    min-width: 0;
}

.viewport {
    display: block;
    width: 100%;
    height: 305px;
    flex: none;
    shape-rendering: crispEdges;
}

.labels text {
    fill: #dcdcdc;
    font: 500 16px Roboto, sans-serif;
    text-anchor: middle;
}

.red, .green, .ring, .gizmo {
    fill: none;
}

.red {
    stroke: #f00;
}

.green {
    stroke: #008000;
}

.ring {
    stroke: rgba(255,255,255,0.45);
}

.snap {
    padding-left: 212px;
}

.bar-offset {
    margin-left: 3px;
}

.bar-offset .grip + .combo {
    margin: 0 -3px 0 -2px;
}

.num {
    display: flex;
    align-items: center;
    gap: 2px;
    color: #6d6d6d;
    margin-left: -1px;
}

.check + .num {
    margin-left: -3px;
}

.spin {
    display: flex;
    align-items: center;
    width: 58px;
    height: 23px;
    padding-right: 5px;
    border: 1px solid #7a7a7a;
}

.spin.wide {
    width: 69px;
}

.spin input {
    flex: 1;
    min-width: 0;
    text-align: right;
    padding-right: 11px;
}

.spin i {
    width: 6px;
    height: 17px;
    background: #666;
    clip-path: polygon(0 4px, 50% 0, 100% 4px, 100% 4px, 100% 13px, 50% 17px, 0 13px, 100% 13px, 100% 4px, 0 4px);
}

.check {
    display: flex;
    align-items: center;
    gap: 8px;
    margin-left: -2px;
}

.check input {
    appearance: none;
    width: 11px;
    height: 11px;
    border: 1px solid #777;
}

/* Rebar editor */
.editor {
    display: flex;
    flex: 1;
    min-height: 0;
    margin: 3px 1px 0;
}

.dock {
    width: 12px;
    background: radial-gradient(circle, #bbb 1px, transparent 1px) 1px 0 / 5px 5px;
}

.dock button {
    display: block;
    width: 11px;
    height: 13px;
    background: var(--face);
}

.dock svg {
    width: 10px;
    height: 10px;
    fill: none;
    stroke: #40203a;
}

.sheet {
    display: flex;
    flex-direction: column;
    flex: 1;
    min-width: 0;
}

.bar-edit {
    height: 27px;
    border-radius: 0;
}

.nav + .nav {
    margin-left: 1px;
}

.bar-edit .sep + .nav {
    margin-left: -2px;
}

.grid {
    flex: 1;
    min-height: 0;
    overflow: hidden;
    border: 1px solid #a0a0a0;
    border-bottom: 0;
    background: #fff;
    font-family: var(--song);
}

/* The last column runs past the right edge */
.grid table {
    width: calc(100% + 14px);
    table-layout: fixed;
    border-collapse: collapse;
}

.grid th, .grid td {
    height: 19px;
    border: 1px solid #bcbcbc;
    border-width: 0 1px 1px 0;
    font-weight: normal;
    line-height: 18px;
    white-space: nowrap;
    overflow: hidden;
}

.grid thead th {
    height: 20px;
    background: linear-gradient(#fefefe, #ececec);
}

.grid thead .hot {
    background: linear-gradient(#fbd596, #f5c05f);
    color: #600040;
}

.grid .rowno {
    background: #ffd58b;
    color: #600040;
}

.grid .cell-on {
    background: #d8e9f8;
    border-left: 1px solid #000;
}

.w33 { width: 33px; }
.w36 { width: 36px; }
.w38 { width: 38px; }
.w39 { width: 39px; }
.w50 { width: 50px; }
.w57 { width: 57px; }
.w61 { width: 61px; }
.w71 { width: 71px; }
.w72 { width: 72px; }
.w156 { width: 156px; }
.w166 { width: 166px; }

.hscroll {
    display: flex;
    align-items: center;
    gap: 5px;
    height: 18px;
    padding: 0 5px 1px;
    border: 1px solid #a0a0a0;
    border-top: 0;
    background: var(--face);
    flex: none;
}

.track {
    flex: 1;
    align-self: stretch;
}

.track i {
    display: block;
    width: 72%;
    height: 15px;
    background: #cdcdcd;
}

/* Status bar */
.status {
    display: flex;
    gap: 2px;
    height: 20px;
    font: 12px/17px var(--song);
    flex: none;
}

.status span {
    padding-left: 2px;
    border: 1px solid #d0d0d0;
    border-left-color: #dcdcdc;
    background: #f7f7f7;
    white-space: nowrap;
}

.s1 { width: 149px; }
.s2 { width: 78px; }
.s3 { width: 98px; }
.s4 { width: 48px; }
.s5 { flex: 1; }
.s6 { width: 70px; }

/* Windows taskbar */
.taskbar {
    display: flex;
    height: 40px;
    background: var(--task);
    color: #fff;
    flex: none;
}

.start {
    width: 48px;
    background: #030607;
}

.start svg {
    display: block;
    width: 16px;
    height: 16px;
    margin: 0 auto;
}

.search {
    display: flex;
    align-items: center;
    gap: 9px;
    width: 344px;
    padding: 0 15px 0 9px;
    background: #f0f0f0;
    color: #444;
    font-size: 14px;
}

.search input {
    flex: 1;
    min-width: 0;
}

.search input::placeholder {
    color: #444;
}

.cortana {
    width: 22px;
    height: 22px;
}

.mic {
    width: 12px;
    height: 18px;
}

.apps {
    display: flex;
    gap: 11px;
    flex: 1;
    padding-left: 4px;
}

.apps button {
    width: 40px;
}

.apps svg {
    display: block;
    width: 24px;
    height: 24px;
    margin: 0 auto;
}

.apps .running {
    border-bottom: 2px solid #76b9ed;
    padding-top: 2px;
}

.taskscroll {
    display: flex;
    flex-direction: column;
    justify-content: space-between;
    align-items: center;
    width: 17px;
    padding: 4px 0;
    background: var(--face);
}

.tray {
    display: flex;
    align-items: center;
    gap: 9px;
    flex: 0 0 443px;
    padding: 0 17px 0 99px;
}

.tray svg {
    width: 16px;
    height: 16px;
    fill: none;
    stroke: #fff;
    flex: none;
}

.tray .people {
    margin-right: 11px;
}

.tray .kbd {
    width: 24px;
    height: 14px;
}

.tray time {
    flex: 1;
    line-height: 19px;
    text-align: center;
}

.notice {
    display: flex;
    position: relative;
}

.notice b {
    position: absolute;
    left: 7px;
    top: 6px;
    width: 16px;
    border-radius: 50%;
    background: #333;
    color: #fff;
    font-size: 11px;
}
```
